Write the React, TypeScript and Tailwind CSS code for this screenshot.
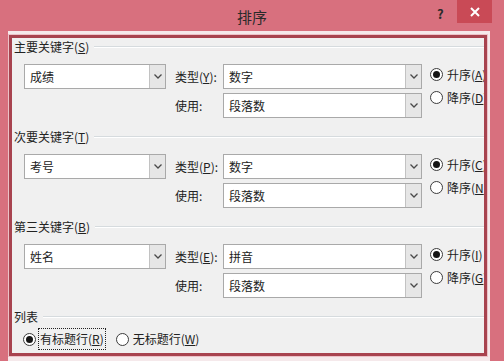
import React from "react";

const FONT = { fontFamily: '"Noto Sans CJK SC", "Noto Sans", sans-serif' };

function Chevron() {
  return (
    <svg width="8" height="5" viewBox="0 0 8 5">
      <path d="M0.5 0.5 L4 4 L7.5 0.5" fill="none" stroke="#4a4a4a" strokeWidth="1.3" />
    </svg>
  );
}

function Combo({ w, value }: { w: string; value: string }) {
  return (
    <div className={`${w} h-[25px] flex border border-[#a9a9a9] bg-white shrink-0`}>
      <div className="flex-1 flex items-center pl-[5px] text-[12px] text-[#222]">{value}</div>
      <div className="w-[16px] flex items-center justify-center bg-[#e6e6e6] border-l border-[#c2c2c2]">
        <Chevron />
      </div>
    </div>
  );
}

function Radio({ on }: { on?: boolean }) {
  return (
    <div className="w-[13px] h-[13px] rounded-full border border-[#3c3c3c] bg-white flex items-center justify-center shrink-0">
      {on && <div className="w-[7px] h-[7px] rounded-full bg-[#151515]" />}
    </div>
  );
}

function Header({ children }: { children: React.ReactNode }) {
  return (
    <div className="h-[18px] flex items-center pl-[2px] text-[12px] text-[#222]">
      <span className="whitespace-nowrap">{children}</span>
      <div className="flex-1 ml-[5px] h-[2px] border-t border-[#d6dbde] border-b border-b-white" />
    </div>
  );
}

function Section({
  title,
  acc,
  keyVal,
  typeAcc,
  typeVal,
  up,
  down,
}: {
  title: string;
  acc: string;
  keyVal: string;
  typeAcc: string;
  typeVal: string;
  up: string;
  down: string;
}) {
  return (
    <div className="pb-[10px]">
      <Header>
        {title}(<span className="underline">{acc}</span>)
      </Header>
      <div className="flex items-start pl-[12px] mt-[8px]">
        <Combo w="w-[142px]" value={keyVal} />
        <div className="ml-[9px] flex flex-col gap-[4px]">
          <div className="h-[25px] flex items-center">
            <span className="w-[48px] text-[12px] text-[#222] whitespace-nowrap">
              类型(<span className="underline">{typeAcc}</span>):
            </span>
            <Combo w="w-[199px]" value={typeVal} />
          </div>
          <div className="h-[25px] flex items-center">
            <span className="w-[48px] text-[12px] text-[#222]">使用:</span>
            <Combo w="w-[199px]" value="段落数" />
          </div>
        </div>
        <div className="ml-[8px] flex flex-col -mt-[1px]">
          <div className="h-[23px] flex items-center gap-[4px] text-[12px] text-[#222] whitespace-nowrap">
            <Radio on />
            <span>
              升序(<span className="underline">{up}</span>)
            </span>
          </div>
          <div className="h-[23px] flex items-center gap-[4px] text-[12px] text-[#222] whitespace-nowrap">
            <Radio />
            <span>
              降序(<span className="underline">{down}</span>)
            </span>
          </div>
        </div>
      </div>
    </div>
  );
}

export default function App() {
  return (
    <div className="w-[504px] h-[361px] bg-[#d8707e] flex flex-col overflow-hidden" style={FONT}>
      <div className="h-[31px] relative shrink-0">
        <div className="absolute inset-x-0 top-[6px] text-center text-[15px] text-[#2a2a2a]">排序</div>
        <div className="absolute left-[437px] top-[4px] text-[13px] font-bold text-[#2a2a2a]">?</div>
        <div className="absolute left-[457px] top-0 w-[35px] h-[23px] bg-[#c94a56] flex items-center justify-center">
          <svg width="10" height="10" viewBox="0 0 10 10">
            <path d="M1 1 L9 9 M9 1 L1 9" stroke="#ffffff" strokeWidth="2" />
          </svg>
        </div>
      </div>
      <div className="flex-1 mx-[8px] w-[482px] bg-[#f5e9eb] pt-[4px] pl-[1px]">
        <div className="w-[478px] h-[321px] border-[3px] border-[#a8434f] shadow-[0_0_0_1px_#ecc2c8] bg-[#f0f0f0] overflow-hidden">
          <Section title="主要关键字" acc="S" keyVal="成绩" typeAcc="Y" typeVal="数字" up="A" down="D" />
          <Section title="次要关键字" acc="T" keyVal="考号" typeAcc="P" typeVal="数字" up="C" down="N" />
          <Section title="第三关键字" acc="B" keyVal="姓名" typeAcc="E" typeVal="拼音" up="I" down="G" />
          <Header>列表</Header>
          <div className="mt-[2px] h-[22px] flex items-center pl-[11px] text-[12px] text-[#222] whitespace-nowrap">
            <Radio on />
            <span className="ml-[2px] px-[1px] border border-dotted border-[#222] h-[22px] flex items-center">
              有标题行(<span className="underline">R</span>)
            </span>
            <span className="ml-[10px]">
              <Radio />
            </span>
            <span className="ml-[4px]">
              无标题行(<span className="underline">W</span>)
            </span>
          </div>
        </div>
      </div>
    </div>
  );
}
